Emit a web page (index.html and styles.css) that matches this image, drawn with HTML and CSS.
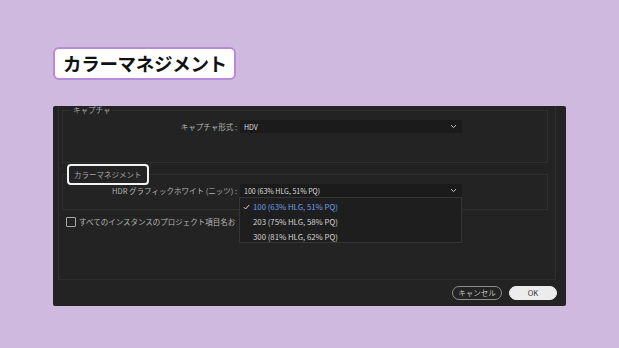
FILE: index.html
```html
<!DOCTYPE html>
<html lang="ja">
<head>
    <meta charset="UTF-8">
    <title>カラーマネジメント</title>
    <link rel="stylesheet" href="styles.css">
</head>
<body>
    <div class="page">
        <div class="title-tag">カラーマネジメント</div>

        <div class="dialog">
            <div class="panel">
                <fieldset class="group group-capture">
                    <legend class="legend">キャプチャ</legend>
                    <div class="form-row">
                        <span class="form-label">キャプチャ形式 :</span>
                        <div class="select">
                            <span>HDV</span>
                            <svg class="chevron" width="7" height="5" viewBox="0 0 7 5"><path d="M1 1.2 L3.5 3.6 L6 1.2" fill="none" stroke="#c8c8c8" stroke-width="1"/></svg>
                        </div>
                    </div>
                </fieldset>

                <fieldset class="group group-color">
                    <legend class="legend legend-marked">カラーマネジメント</legend>
                    <div class="form-row">
                        <span class="form-label">HDR グラフィックホワイト (ニッツ) :</span>
                        <div class="select select-open">
                            <span>100 (63% HLG, 51% PQ)</span>
                            <svg class="chevron" width="7" height="5" viewBox="0 0 7 5"><path d="M1 1.2 L3.5 3.6 L6 1.2" fill="none" stroke="#c8c8c8" stroke-width="1"/></svg>
                            <ul class="dropdown">
                                <li class="option selected">
                                    <svg class="check" width="7" height="6" viewBox="0 0 7 6"><path d="M0.8 3.2 L2.6 5 L6.2 0.9" fill="none" stroke="#d6d6d6" stroke-width="1"/></svg>
                                    100 (63% HLG, 51% PQ)
                                </li>
                                <li class="option">203 (75% HLG, 58% PQ)</li>
                                <li class="option">300 (81% HLG, 62% PQ)</li>
                            </ul>
                        </div>
                    </div>
                </fieldset>

                <label class="check-row">
                    <span class="checkbox"></span>
                    <span class="check-text">すべてのインスタンスのプロジェクト項目名お</span>
                </label>
            </div>

            <div class="footer">
                <button class="btn btn-cancel">キャンセル</button>
                <button class="btn btn-ok">OK</button>
            </div>
        </div>
    </div>
</body>
</html>
```

FILE: styles.css
```css
* {
    margin: 0;
    padding: 0;
    box-sizing: border-box;
}

body {
    background: #cfb9de;
    font-family: 'Noto Sans CJK JP', 'Noto Sans', sans-serif;
    width: 619px;
    height: 348px;
    overflow: hidden;
}

.page {
    padding: 47px 0 0 53px;
}

.title-tag {
    display: inline-block;
    height: 33px;
    padding: 0 7px 0 8px;
    background: #ffffff;
    border: 2px solid #b98ad9;
    border-radius: 6px;
    font-size: 18.5px;
    font-weight: bold;
    line-height: 29px;
    color: #111;
    letter-spacing: -0.3px;
}

.dialog {
    margin-top: 26px;
    width: 513px;
    height: 200px;
    background: #232323;
    border-radius: 2px;
    display: flex;
    flex-direction: column;
    overflow: hidden;
    color: #b8b8b8;
    font-size: 7.5px;
}

.panel {
    flex: 1;
    margin: -1px 10px 0 5px;
    padding: 0 7px 0 3px;
    border: 1px solid #2e2e2e;
    border-top: none;
}

.group {
    border: 1px solid #2f2f2f;
    padding: 0;
}

.legend {
    margin-left: 8px;
    padding: 0 2px;
    line-height: 10px;
    color: #a9a9a9;
}

.group-capture .form-row {
    margin-top: 5px;
    padding-bottom: 29px;
}

.group-color {
    margin-top: 1px;
}

.legend-marked {
    margin-left: 4px;
    height: 21px;
    padding: 2px 5px 0 5px;
    border: 2px solid #f2f2f2;
    border-radius: 4px;
    background: #232323;
    line-height: 13px;
}

.group-color .form-row {
    margin-top: -1px;
    padding-bottom: 12px;
}

.form-row {
    display: grid;
    grid-template-columns: 174px 222px;
    column-gap: 3px;
    align-items: center;
}

.form-label {
    text-align: right;
    white-space: nowrap;
    color: #b4b4b4;
}

.select {
    position: relative;
    height: 13px;
    background: #1b1b1b;
    display: flex;
    align-items: center;
    justify-content: space-between;
    padding: 0 5px 0 4px;
    color: #dcdcdc;
    font-size: 7px;
}

.dropdown {
    position: absolute;
    top: 13px;
    left: -1px;
    width: 223px;
    height: 46px;
    list-style: none;
    background: #1e1e1e;
    border: 1px solid #353535;
    padding-top: 1px;
    z-index: 2;
}

.option {
    height: 15px;
    line-height: 15px;
    padding-left: 13px;
    font-size: 7.8px;
    color: #d4d4d4;
    position: relative;
}

.option.selected {
    color: #6f9fe6;
}

.check {
    position: absolute;
    left: 3px;
    top: 5px;
}

.check-row {
    display: flex;
    align-items: center;
    gap: 3px;
    margin: 6px 0 0 4px;
    white-space: nowrap;
    color: #b4b4b4;
}

.checkbox {
    width: 10px;
    height: 10px;
    border: 1px solid #a8a8a8;
    border-radius: 1px;
    flex-shrink: 0;
}

.footer {
    display: flex;
    justify-content: flex-end;
    gap: 7px;
    padding: 6px 9px 6px 0;
}

.btn {
    height: 14px;
    border-radius: 7px;
    font-family: inherit;
    font-size: 7.5px;
    line-height: 12px;
}

.btn-cancel {
    width: 50px;
    background: transparent;
    border: 1px solid #8c8c8c;
    color: #bdbdbd;
}

.btn-ok {
    width: 48px;
    background: #ececec;
    border: 1px solid #ececec;
    color: #333;
}
```
